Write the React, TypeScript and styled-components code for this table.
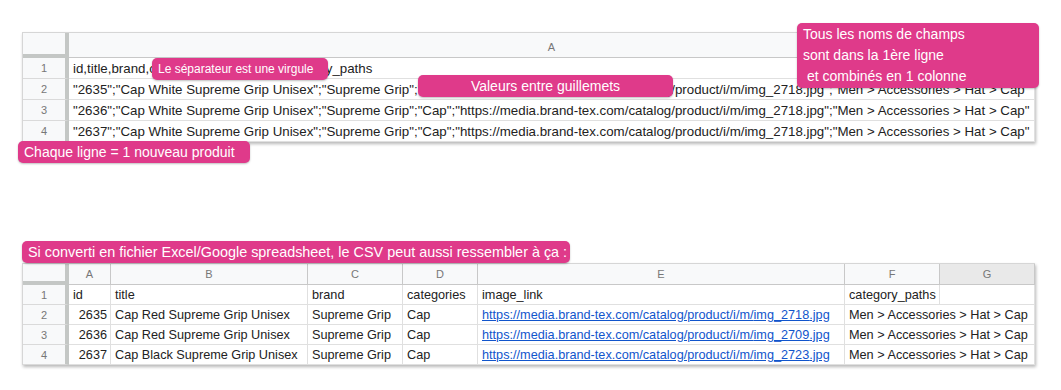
import React from "react";
import styled, { createGlobalStyle } from "styled-components";

const GlobalStyle = createGlobalStyle`
  html, body { margin: 0; padding: 0; background: #ffffff; }
  body { font-family: "Liberation Sans", Arial, sans-serif; }
`;

const PINK = "#df3a8a";

const Page = styled.div`
  width: 1061px;
  height: 390px;
  background: #fff;
  overflow: hidden;
  display: flex;
  flex-direction: column;
`;

const TopArea = styled.section`
  position: relative;
  padding: 32px 0 0 22px;
`;

const BottomArea = styled.section`
  margin-top: 99px;
  padding-left: 22px;
  display: flex;
  flex-direction: column;
  align-items: flex-start;
`;

const Sheet = styled.div<{ $cols: string; $font: number }>`
  display: grid;
  grid-template-columns: ${(p) => p.$cols};
  width: 1013px;
  border-top: 1px solid #d6d6d6;
  border-left: 1px solid #d6d6d6;
  box-shadow: 1px 2px 3px rgba(0, 0, 0, 0.28);
  background: #fff;
  box-sizing: border-box;
  font-size: ${(p) => p.$font}px;
`;

const Corner = styled.div<{ $h: number }>`
  height: ${(p) => p.$h}px;
  box-sizing: border-box;
  background: #f8f9fa;
  border-right: 4px solid #c4c7c5;
  border-bottom: 4px solid #c4c7c5;
`;

const ColHeader = styled.div<{ $h: number; $dark?: boolean }>`
  height: ${(p) => p.$h}px;
  box-sizing: border-box;
  background: ${(p) => (p.$dark ? "#e9e9e9" : "#f8f9fa")};
  border-right: 1px solid #c8c8c8;
  border-bottom: 1px solid #c8c8c8;
  color: #777;
  font-size: 11px;
  display: flex;
  align-items: center;
  justify-content: center;
  padding-top: ${(p) => (p.$h > 22 ? 4 : 0)}px;
`;

const RowHeader = styled.div<{ $h: number }>`
  height: ${(p) => p.$h}px;
  box-sizing: border-box;
  background: #f8f9fa;
  border-right: 4px solid #c4c7c5;
  border-bottom: 1px solid #dadada;
  color: #777;
  font-size: 11px;
  display: flex;
  align-items: center;
  justify-content: center;
`;

const Cell = styled.div<{ $h: number; $right?: boolean; $span?: number }>`
  height: ${(p) => p.$h}px;
  box-sizing: border-box;
  grid-column: span ${(p) => p.$span ?? 1};
  border-right: 1px solid #e0e0e0;
  border-bottom: 1px solid #e0e0e0;
  color: #222;
  white-space: nowrap;
  overflow: hidden;
  display: flex;
  align-items: center;
  justify-content: ${(p) => (p.$right ? "flex-end" : "flex-start")};
  padding: 0 3px 0 4px;
`;

const Link = styled.span`
  color: #1155cc;
  text-decoration: underline;
`;

const Callout = styled.div<{ $top: number; $left: number; $w: number; $h: number; $size: number; $center?: boolean }>`
  position: absolute;
  top: ${(p) => p.$top}px;
  left: ${(p) => p.$left}px;
  width: ${(p) => p.$w}px;
  height: ${(p) => p.$h}px;
  box-sizing: border-box;
  background: ${PINK};
  color: #fff;
  border-radius: 5px;
  box-shadow: 0 1px 2px rgba(0, 0, 0, 0.25);
  font-size: ${(p) => p.$size}px;
  display: flex;
  align-items: center;
  justify-content: ${(p) => (p.$center ? "center" : "flex-start")};
  padding: 0 6px;
  white-space: nowrap;
`;

const MultiCallout = styled.div`
  position: absolute;
  top: 23px;
  left: 797px;
  width: 242px;
  height: 65px;
  box-sizing: border-box;
  background: ${PINK};
  color: #fff;
  border-radius: 5px;
  box-shadow: 0 1px 2px rgba(0, 0, 0, 0.25);
  font-size: 14px;
  line-height: 21px;
  padding: 1px 6px 0;
  white-space: pre;
`;

const Banner = styled.div`
  background: ${PINK};
  color: #fff;
  border-radius: 5px;
  box-shadow: 0 1px 2px rgba(0, 0, 0, 0.25);
  font-size: 14.4px;
  height: 22px;
  width: 548px;
  box-sizing: border-box;
  display: flex;
  align-items: center;
  padding: 0 6px;
  white-space: nowrap;
  position: relative;
  z-index: 1;
`;

const topRows = [
  "id,title,brand,categories,image_link,category_paths",
  "\"2635\";\"Cap White Supreme Grip Unisex\";\"Supreme Grip\";\"Cap\";\"https://media.brand-tex.com/catalog/product/i/m/img_2718.jpg\";\"Men > Accessories > Hat > Cap\"",
  "\"2636\";\"Cap White Supreme Grip Unisex\";\"Supreme Grip\";\"Cap\";\"https://media.brand-tex.com/catalog/product/i/m/img_2718.jpg\";\"Men > Accessories > Hat > Cap\"",
  "\"2637\";\"Cap White Supreme Grip Unisex\";\"Supreme Grip\";\"Cap\";\"https://media.brand-tex.com/catalog/product/i/m/img_2718.jpg\";\"Men > Accessories > Hat > Cap\"",
];

const products = [
  { id: "2635", title: "Cap Red Supreme Grip Unisex", img: "img_2718" },
  { id: "2636", title: "Cap Red Supreme Grip Unisex", img: "img_2709" },
  { id: "2637", title: "Cap Black Supreme Grip Unisex", img: "img_2723" },
];

const letters = ["A", "B", "C", "D", "E", "F", "G"];

export default function App() {
  return (
    <Page>
      <GlobalStyle />
      <TopArea>
        <Sheet $cols="46px 1fr" $font={13.3}>
          <Corner $h={25} />
          <ColHeader $h={25}>A</ColHeader>
          {topRows.map((t, i) => (
            <React.Fragment key={i}>
              <RowHeader $h={21}>{i + 1}</RowHeader>
              <Cell $h={21}>{t}</Cell>
            </React.Fragment>
          ))}
        </Sheet>
        <Callout $top={58} $left={152} $w={176} $h={22} $size={12}>
          Le séparateur est une virgule
        </Callout>
        <Callout $top={75} $left={418} $w={255} $h={22} $size={14} $center>
          Valeurs entre guillemets
        </Callout>
        <MultiCallout>{"Tous les noms de champs\nsont dans la 1ère ligne\n et combinés en 1 colonne"}</MultiCallout>
        <Callout $top={141} $left={18} $w={232} $h={22} $size={14}>
          Chaque ligne = 1 nouveau produit
        </Callout>
      </TopArea>
      <BottomArea>
        <Banner>Si converti en fichier Excel/Google spreadsheet, le CSV peut aussi ressembler à ça :</Banner>
        <Sheet $cols="46px 42px 197px 95px 75px 367px 95px 1fr" $font={12.7}>
          <Corner $h={21} />
          {letters.map((l) => (
            <ColHeader key={l} $h={21} $dark={l === "G"}>
              {l}
            </ColHeader>
          ))}
          <RowHeader $h={20}>1</RowHeader>
          <Cell $h={20}>id</Cell>
          <Cell $h={20}>title</Cell>
          <Cell $h={20}>brand</Cell>
          <Cell $h={20}>categories</Cell>
          <Cell $h={20}>image_link</Cell>
          <Cell $h={20}>category_paths</Cell>
          <Cell $h={20} />
          {products.map((p, i) => (
            <React.Fragment key={p.id}>
              <RowHeader $h={20}>{i + 2}</RowHeader>
              <Cell $h={20} $right>
                {p.id}
              </Cell>
              <Cell $h={20}>{p.title}</Cell>
              <Cell $h={20}>Supreme Grip</Cell>
              <Cell $h={20}>Cap</Cell>
              <Cell $h={20}>
                <Link>https://media.brand-tex.com/catalog/product/i/m/{p.img}.jpg</Link>
              </Cell>
              <Cell $h={20} $span={2}>
                Men &gt; Accessories &gt; Hat &gt; Cap
              </Cell>
            </React.Fragment>
          ))}
        </Sheet>
      </BottomArea>
    </Page>
  );
}
